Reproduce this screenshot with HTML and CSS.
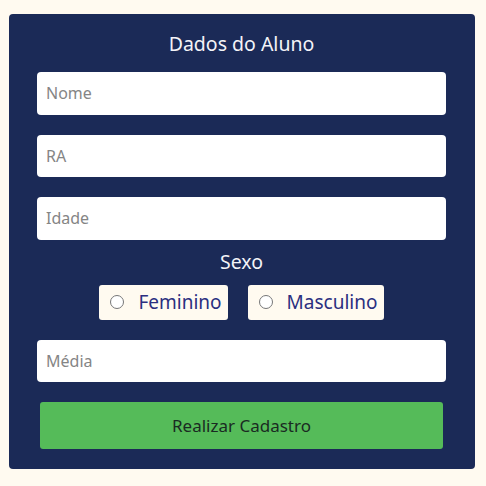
FILE: index.html
```html
<!DOCTYPE html>
<html lang="pt-BR">
<head>
<meta charset="utf-8">
<title>Cadastro</title>
<link rel="stylesheet" href="styles.css">
</head>
<body>
<form class="card">
  <h1 class="title">Dados do Aluno</h1>
  <input class="field" type="text" placeholder="Nome">
  <input class="field" type="text" placeholder="RA">
  <input class="field" type="text" placeholder="Idade">
  <div class="label">Sexo</div>
  <div class="radios">
    <label class="radio"><input type="radio" name="sexo"><span>Feminino</span></label>
    <label class="radio"><input type="radio" name="sexo"><span>Masculino</span></label>
  </div>
  <input class="field" type="text" placeholder="Média">
  <button class="submit" type="button">Realizar Cadastro</button>
</form>
</body>
</html>
```

FILE: styles.css
```css
html, body {
  margin: 0;
  padding: 0;
  background: #fffaf0;
}
body {
  font-family: "Noto Sans", "Open Sans", sans-serif;
  padding: 14px 0 0 9px;
}
.card {
  width: 466px;
  box-sizing: border-box;
  background: #1b2a57;
  border-radius: 4px;
  padding: 18px 29px 20px 28px;
  display: flex;
  flex-direction: column;
}
.title {
  margin: 0 0 16px;
  font-size: 19.5px;
  line-height: 24px;
  font-weight: 400;
  color: #f4f4f8;
  text-align: center;
}
.field {
  display: block;
  height: 42.5px;
  box-sizing: border-box;
  border: none;
  border-radius: 4px;
  background: #fff;
  padding: 0 9px;
  margin: 0 0 20px;
  font-family: inherit;
  font-size: 16px;
  color: #333;
  outline: none;
}
.field::placeholder {
  color: #858585;
}
.label {
  margin-top: -10px;
  font-size: 19.5px;
  line-height: 24px;
  color: #f4f4f8;
  text-align: center;
}
.radios {
  display: flex;
  justify-content: center;
  gap: 20px;
  margin: 11px 0 20px;
}
.radio {
  display: flex;
  align-items: center;
  height: 35px;
  box-sizing: border-box;
  background: #fffaf0;
  border-radius: 3px;
  padding: 0 6px 0 10px;
  font-size: 19px;
  color: #2b2f80;
}
.radio input {
  margin: 0 14px 0 1px;
  width: 14px;
  height: 14px;
}
.submit {
  margin: 0 3px;
  height: 47px;
  border: none;
  border-radius: 3px;
  background: #55bb59;
  font-family: inherit;
  font-size: 17px;
  color: #1a2a22;
}
```
